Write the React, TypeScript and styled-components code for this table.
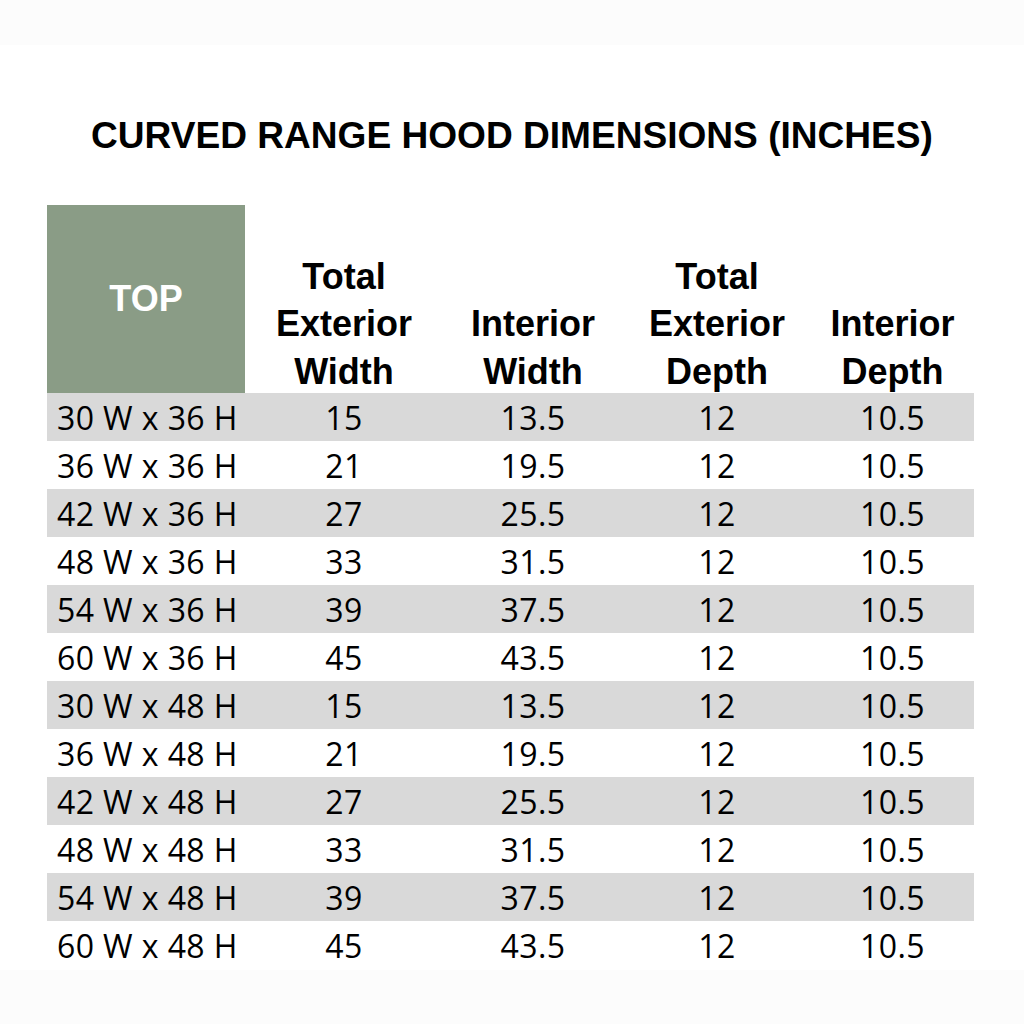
import React from 'react';
import styled, {createGlobalStyle} from 'styled-components';

const Global = createGlobalStyle`
  html, body {
    margin: 0;
    padding: 0;
    background: #fcfcfc;
  }
`;

const Page = styled.div`
  width: 1024px;
  height: 1024px;
  display: flex;
  flex-direction: column;
  background: #fcfcfc;
`;

const Sheet = styled.div`
  margin-top: 45px;
  background: #ffffff;
  padding: 69px 0 0 47px;
  height: 856px;
`;

const Title = styled.h1`
  margin: 0 0 49px -47px;
  font-family: "Liberation Sans", Arial, sans-serif;
  font-weight: 700;
  font-size: 37.1px;
  line-height: 42px;
  text-align: center;
  color: #000;
`;

const Table = styled.div`
  display: grid;
  grid-template-columns: 198px 198px 180px 188px 163px;
  width: 927px;
`;

const HeadCell = styled.div<{$top?: boolean}>`
  height: 188px;
  display: flex;
  align-items: ${p => (p.$top ? 'center' : 'flex-end')};
  justify-content: center;
  text-align: center;
  font-family: "Liberation Sans", Arial, sans-serif;
  font-weight: 700;
  font-size: 36px;
  line-height: 47.5px;
  color: ${p => (p.$top ? '#ffffff' : '#000000')};
  background: ${p => (p.$top ? '#8a9c86' : 'transparent')};
`;

const HeadText = styled.span<{$top?: boolean}>`
  margin-bottom: ${p => (p.$top ? '0' : '-2px')};
`;

const Cell = styled.div<{$shaded: boolean; $label?: boolean}>`
  height: 48px;
  box-sizing: border-box;
  padding: 2px ${p => (p.$label ? '0 0 10px' : '0')};
  text-align: ${p => (p.$label ? 'left' : 'center')};
  font-family: "Open Sans", "Noto Sans", sans-serif;
  font-size: 32px;
  letter-spacing: 0.4px;
  line-height: 46px;
  color: #000;
  background: ${p => (p.$shaded ? '#d9d9d9' : '#ffffff')};
  white-space: nowrap;
`;

type Row = [string, string, string, string, string];

const sizes: Array<[number, number, number]> = [
  [30, 15, 13.5],
  [36, 21, 19.5],
  [42, 27, 25.5],
  [48, 33, 31.5],
  [54, 39, 37.5],
  [60, 45, 43.5],
];

const rows: Row[] = [36, 48].flatMap(h =>
  sizes.map(([w, ext, int]) => [
    `${w} W x ${h} H`,
    String(ext),
    String(int),
    '12',
    '10.5',
  ] as Row),
);

const headers: string[][] = [
  ['Total', 'Exterior', 'Width'],
  ['Interior', 'Width'],
  ['Total', 'Exterior', 'Depth'],
  ['Interior', 'Depth'],
];

const App: React.FC = () => {
  return (
    <Page>
      <Global />
      <Sheet>
        <Title>CURVED RANGE HOOD DIMENSIONS (INCHES)</Title>
        <Table>
          <HeadCell $top>
            <HeadText $top>TOP</HeadText>
          </HeadCell>
          {headers.map((lines, i) => (
            <HeadCell key={i}>
              <HeadText>
                {lines.map((l, k) => (
                  <React.Fragment key={k}>
                    {k > 0 && <br />}
                    {l}
                  </React.Fragment>
                ))}
              </HeadText>
            </HeadCell>
          ))}
          {rows.map((row, i) =>
            row.map((v, j) => (
              <Cell key={`${i}-${j}`} $shaded={i % 2 === 0} $label={j === 0}>
                {v}
              </Cell>
            )),
          )}
        </Table>
      </Sheet>
    </Page>
  );
};

export default App;
